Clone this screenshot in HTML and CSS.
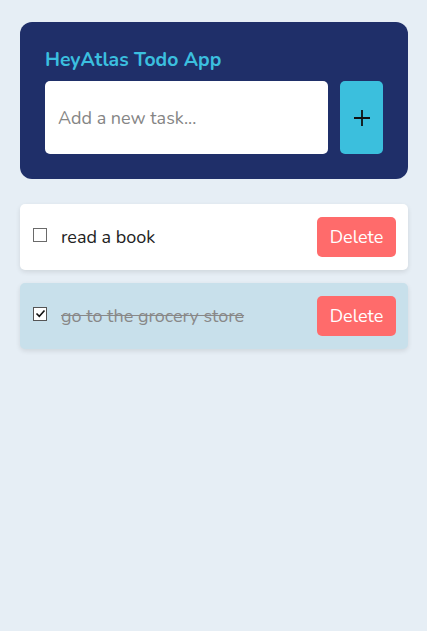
FILE: index.html
```html
<!DOCTYPE html>
<html lang="en">
<head>
<meta charset="utf-8">
<title>HeyAtlas Todo App</title>
<link rel="stylesheet" href="styles.css">
</head>
<body>
<div class="app">
  <header class="panel">
    <h1 class="title">HeyAtlas Todo App</h1>
    <form class="add-form">
      <input class="task-input" type="text" placeholder="Add a new task...">
      <button class="add-btn" type="button" aria-label="Add">
        <svg width="20" height="20" viewBox="0 0 20 20"><path d="M10 2v16M2 10h16" stroke="#111" stroke-width="1.8" fill="none"/></svg>
      </button>
    </form>
  </header>
  <ul class="list">
    <li class="item">
      <span class="check"></span>
      <span class="text">read a book</span>
      <button class="del" type="button">Delete</button>
    </li>
    <li class="item done">
      <span class="check checked"><svg width="11" height="11" viewBox="0 0 11 11"><path d="M1.5 5.5l2.8 2.8L9.5 2.5" stroke="#111" stroke-width="1.6" fill="none"/></svg></span>
      <span class="text">go to the grocery store</span>
      <button class="del" type="button">Delete</button>
    </li>
  </ul>
</div>
</body>
</html>
```
FILE: styles.css
```css
* { box-sizing: border-box; }
html, body { margin: 0; }
body {
  background: #e6eef5;
  font-family: "Nunito", "Open Sans", "Noto Sans", sans-serif;
  min-height: 631px;
}
.app {
  padding: 22px 19px 20px 20px;
  display: flex;
  flex-direction: column;
  gap: 25px;
}
.panel {
  background: #1f2f69;
  border-radius: 12px;
  padding: 24px 25px 25px 25px;
}
.title {
  margin: 0 0 8px 0;
  color: #3bbfdf;
  font-size: 19.4px;
  font-weight: 700;
  line-height: 27px;
}
.add-form {
  display: flex;
  gap: 12px;
  margin: 0;
}
.task-input {
  flex: 1;
  height: 73px;
  border: none;
  border-radius: 5px;
  background: #fff;
  padding: 0 13px;
  font-family: inherit;
  font-size: 18px;
  color: #222;
  outline: none;
}
.task-input::placeholder { color: #858585; }
.add-btn {
  width: 43px;
  height: 73px;
  border: none;
  border-radius: 5px;
  background: #3bbfdd;
  display: flex;
  align-items: center;
  justify-content: center;
  padding: 0;
}
.list {
  list-style: none;
  margin: 0;
  padding: 0;
  display: flex;
  flex-direction: column;
  gap: 13px;
}
.item {
  display: flex;
  align-items: center;
  background: #fff;
  border-radius: 5px;
  padding: 13px 12px 13px 13px;
  box-shadow: 0 2px 5px rgba(0, 0, 0, 0.1);
}
.item.done { background: #c8e0eb; }
.check {
  width: 14px;
  height: 14px;
  border: 1.5px solid #6a6a6a;
  background: #fff;
  flex: none;
  display: flex;
  align-items: center;
  justify-content: center;
  margin-top: -5px;
}
.check.checked { border-color: #555; }
.text {
  flex: 1;
  margin-left: 14px;
  font-size: 18px;
  color: #222;
}
.done .text {
  color: #888;
  text-decoration: line-through;
}
.del {
  border: none;
  border-radius: 5px;
  background: #ff6b6b;
  color: #fff;
  font-family: inherit;
  font-size: 18px;
  height: 40px;
  width: 79px;
  padding: 0;
}
```
